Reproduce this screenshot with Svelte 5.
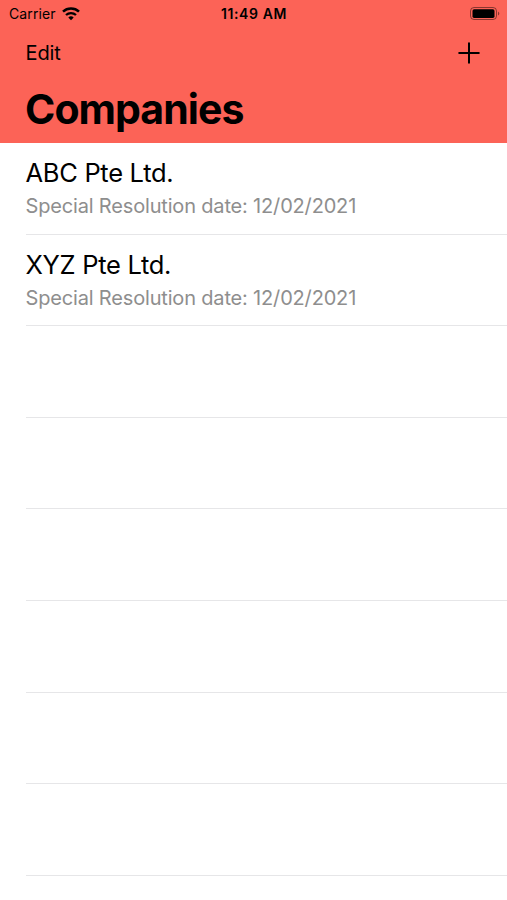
<script lang="ts">
  const companies = [
    { name: 'ABC Pte Ltd.', date: '12/02/2021' },
    { name: 'XYZ Pte Ltd.', date: '12/02/2021' },
  ];
  const emptyRows = 6;
</script>

<div class="screen">
  <header>
    <div class="status">
      <div class="carrier">
        <span>Carrier</span>
        <svg width="18" height="14" viewBox="0 0 18 14" fill="none" stroke="#000">
          <path d="M1 4.7C5.4.5 12.6.5 17 4.7" stroke-width="2.5" />
          <path d="M4 8c2.8-2.6 7.2-2.6 10 0" stroke-width="2.3" />
          <path d="M9 13.3 6.3 10.6a3.9 3.9 0 0 1 5.4 0z" fill="#000" stroke="none" />
        </svg>
      </div>
      <span class="time">11:49 AM</span>
      <svg class="battery" width="31" height="14" viewBox="0 0 31 14">
        <rect x="0.5" y="0.5" width="26" height="12" rx="3.5" fill="none" stroke="#000" stroke-opacity=".45" />
        <rect x="2.5" y="2.3" width="22" height="8.6" rx="1.6" />
        <path d="M28 4.4v4.2c1.8-.8 1.8-3.4 0-4.2z" fill-opacity=".45" />
      </svg>
    </div>
    <nav>
      <button class="edit">Edit</button>
      <button class="add" aria-label="Add company">
        <svg width="22" height="22" viewBox="0 0 22 22" stroke="#000" stroke-width="2" stroke-linecap="round">
          <path d="M11 1.2v19.6M1.2 11h19.6" />
        </svg>
      </button>
    </nav>
    <h1>Companies</h1>
  </header>

  <ul>
    {#each companies as company}
      <li>
        <div class="name">{company.name}</div>
        <div class="detail">Special Resolution date: {company.date}</div>
      </li>
    {/each}
    {#each Array(emptyRows) as _}
      <li></li>
    {/each}
  </ul>
</div>

<style>
  :global(body) {
    background: #fff;
  }
  .screen {
    height: 900px;
    overflow: hidden;
    background: #fff;
    color: #000;
    font-family: Inter, 'Liberation Sans', sans-serif;
  }
  header {
    height: 143px;
    background: #fc6357;
  }
  .status {
    height: 27px;
    padding: 0 6px 0 9px;
    display: grid;
    grid-template-columns: 1fr auto 1fr;
    align-items: center;
    font-size: 14px;
  }
  .carrier {
    display: flex;
    align-items: center;
    gap: 6px;
    letter-spacing: 0.12px;
  }
  .time {
    margin-right: 2px;
    font-weight: 600;
    letter-spacing: 0.6px;
  }
  .battery {
    justify-self: end;
  }
  nav {
    height: 51px;
    padding: 0 27px 0 26px;
    display: flex;
    align-items: center;
    justify-content: space-between;
  }
  button {
    padding: 0;
    border: none;
    background: none;
    color: inherit;
    font: inherit;
    font-size: 20px;
  }
  .edit {
    margin-left: -0.5px;
    letter-spacing: -0.1px;
  }
  .add {
    display: flex;
  }
  h1 {
    margin: 0;
    padding: 7px 25px 0;
    font-size: 41px;
    line-height: 48px;
    font-weight: 700;
    letter-spacing: -0.95px;
  }
  ul {
    margin: 0;
    padding: 0 0 0 26px;
    list-style: none;
  }
  li {
    box-sizing: border-box;
    height: 91.6px;
    padding-top: 13px;
    border-bottom: 1px solid #e6e6e8;
  }
  .name {
    margin-left: -0.5px;
    font-size: 25.5px;
    line-height: 33px;
    letter-spacing: -0.3px;
  }
  .detail {
    margin-left: -0.5px;
    color: #8e8e8e;
    font-size: 20px;
    line-height: 34px;
    letter-spacing: -0.17px;
  }
</style>
